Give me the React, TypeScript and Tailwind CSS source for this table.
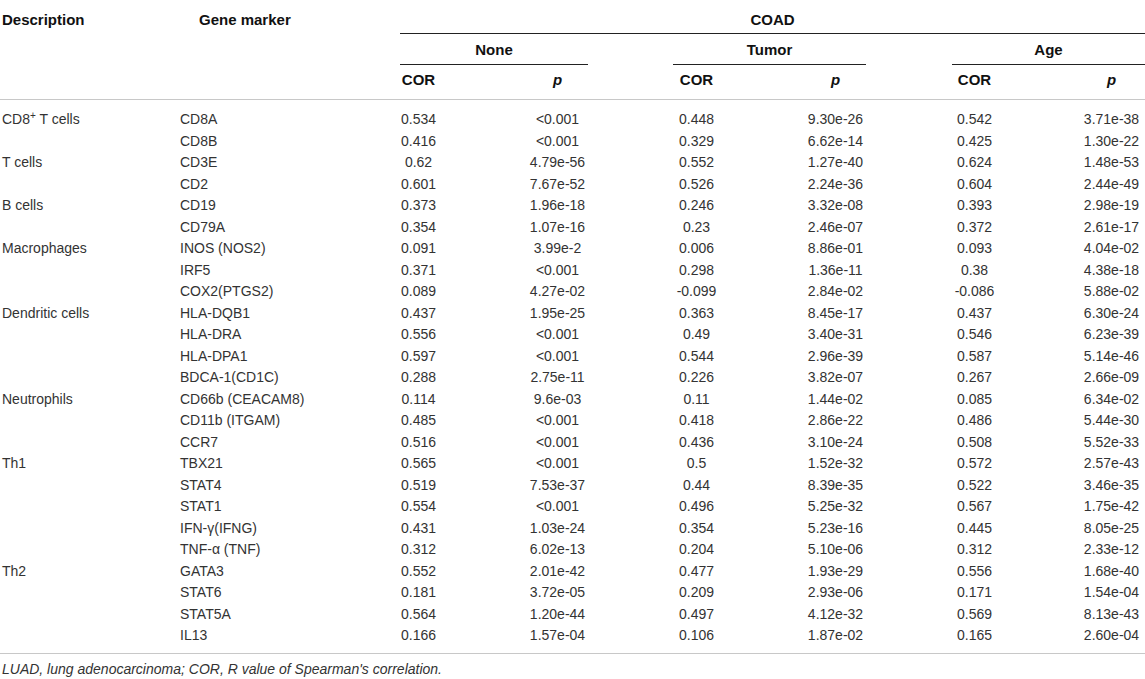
type Row = [string, string, string, string, string, string, string];

const GROUPS: { label: React.ReactNode; rows: Row[] }[] = [
  {
    label: (
      <>
        CD8<sup className="text-[10px] relative -top-[5px]">+</sup> T cells
      </>
    ),
    rows: [
      ['CD8A', '0.534', '<0.001', '0.448', '9.30e-26', '0.542', '3.71e-38'],
      ['CD8B', '0.416', '<0.001', '0.329', '6.62e-14', '0.425', '1.30e-22'],
    ],
  },
  {
    label: 'T cells',
    rows: [
      ['CD3E', '0.62', '4.79e-56', '0.552', '1.27e-40', '0.624', '1.48e-53'],
      ['CD2', '0.601', '7.67e-52', '0.526', '2.24e-36', '0.604', '2.44e-49'],
    ],
  },
  {
    label: 'B cells',
    rows: [
      ['CD19', '0.373', '1.96e-18', '0.246', '3.32e-08', '0.393', '2.98e-19'],
      ['CD79A', '0.354', '1.07e-16', '0.23', '2.46e-07', '0.372', '2.61e-17'],
    ],
  },
  {
    label: 'Macrophages',
    rows: [
      ['INOS (NOS2)', '0.091', '3.99e-2', '0.006', '8.86e-01', '0.093', '4.04e-02'],
      ['IRF5', '0.371', '<0.001', '0.298', '1.36e-11', '0.38', '4.38e-18'],
      ['COX2(PTGS2)', '0.089', '4.27e-02', '-0.099', '2.84e-02', '-0.086', '5.88e-02'],
    ],
  },
  {
    label: 'Dendritic cells',
    rows: [
      ['HLA-DQB1', '0.437', '1.95e-25', '0.363', '8.45e-17', '0.437', '6.30e-24'],
      ['HLA-DRA', '0.556', '<0.001', '0.49', '3.40e-31', '0.546', '6.23e-39'],
      ['HLA-DPA1', '0.597', '<0.001', '0.544', '2.96e-39', '0.587', '5.14e-46'],
      ['BDCA-1(CD1C)', '0.288', '2.75e-11', '0.226', '3.82e-07', '0.267', '2.66e-09'],
    ],
  },
  {
    label: 'Neutrophils',
    rows: [
      ['CD66b (CEACAM8)', '0.114', '9.6e-03', '0.11', '1.44e-02', '0.085', '6.34e-02'],
      ['CD11b (ITGAM)', '0.485', '<0.001', '0.418', '2.86e-22', '0.486', '5.44e-30'],
      ['CCR7', '0.516', '<0.001', '0.436', '3.10e-24', '0.508', '5.52e-33'],
    ],
  },
  {
    label: 'Th1',
    rows: [
      ['TBX21', '0.565', '<0.001', '0.5', '1.52e-32', '0.572', '2.57e-43'],
      ['STAT4', '0.519', '7.53e-37', '0.44', '8.39e-35', '0.522', '3.46e-35'],
      ['STAT1', '0.554', '<0.001', '0.496', '5.25e-32', '0.567', '1.75e-42'],
      ['IFN-γ(IFNG)', '0.431', '1.03e-24', '0.354', '5.23e-16', '0.445', '8.05e-25'],
      ['TNF-α (TNF)', '0.312', '6.02e-13', '0.204', '5.10e-06', '0.312', '2.33e-12'],
    ],
  },
  {
    label: 'Th2',
    rows: [
      ['GATA3', '0.552', '2.01e-42', '0.477', '1.93e-29', '0.556', '1.68e-40'],
      ['STAT6', '0.181', '3.72e-05', '0.209', '2.93e-06', '0.171', '1.54e-04'],
      ['STAT5A', '0.564', '1.20e-44', '0.497', '4.12e-32', '0.569', '8.13e-43'],
      ['IL13', '0.166', '1.57e-04', '0.106', '1.87e-02', '0.165', '2.60e-04'],
    ],
  },
];

// column template shared by header and body
const COLS = 'grid grid-cols-[180px_169px_139px_139px_139px_139px_139px_101px]';

export default function App() {
  return (
    <div
      className="w-[1145px] h-[679px] bg-white overflow-hidden text-[#333]"
      style={{ fontFamily: '"Liberation Sans", Arial, sans-serif' }}
    >
      {/* Header */}
      <div className={`${COLS} border-b border-[#c8c8c8] text-[15px] font-bold text-[#111] leading-5`}>
        <div className="row-span-3 pt-[10px] pl-[2px]">Description</div>
        <div className="row-span-3 pt-[10px] pl-[19px]">Gene marker</div>

        <div className="col-span-6 h-[34px] pt-[10px] ml-[51px] border-b border-[#222] text-center">COAD</div>

        <div className="col-span-2 h-[31px] pt-[6px] ml-[51px] mr-[39px] border-b border-[#222] text-center">None</div>
        <div className="col-span-2 h-[31px] pt-[6px] ml-[46px] mr-[39px] border-b border-[#222] text-center">Tumor</div>
        <div className="col-span-2 h-[31px] pt-[6px] ml-[47px] border-b border-[#222] text-center">Age</div>

        <div className="h-[34px] pt-[5px] text-center">COR</div>
        <div className="pt-[5px] text-center italic">p</div>
        <div className="pt-[5px] text-center">COR</div>
        <div className="pt-[5px] text-center italic">p</div>
        <div className="pt-[5px] text-center">COR</div>
        <div className="pt-[5px] pl-[34px] text-center italic">p</div>
      </div>

      {/* Body */}
      <div className="pt-[9px] pb-[6px] border-b border-[#c8c8c8] text-[14px] leading-[21.5px]">
        {GROUPS.map((g, gi) =>
          g.rows.map((r, ri) => (
            <div key={`${gi}-${ri}`} className={COLS}>
              <div className="pl-[2px] whitespace-nowrap">{ri === 0 ? g.label : ''}</div>
              <div className="whitespace-nowrap">{r[0]}</div>
              <div className="text-center">{r[1]}</div>
              <div className="text-center">{r[2]}</div>
              <div className="text-center">{r[3]}</div>
              <div className="text-center">{r[4]}</div>
              <div className="text-center">{r[5]}</div>
              <div className="pl-[34px] text-center">{r[6]}</div>
            </div>
          ))
        )}
      </div>

      {/* Footnote */}
      <p className="mt-[5px] pl-[2px] text-[14px] leading-5 italic text-[#333]">
        LUAD, lung adenocarcinoma; COR, R value of Spearman's correlation.
      </p>
    </div>
  );
}
